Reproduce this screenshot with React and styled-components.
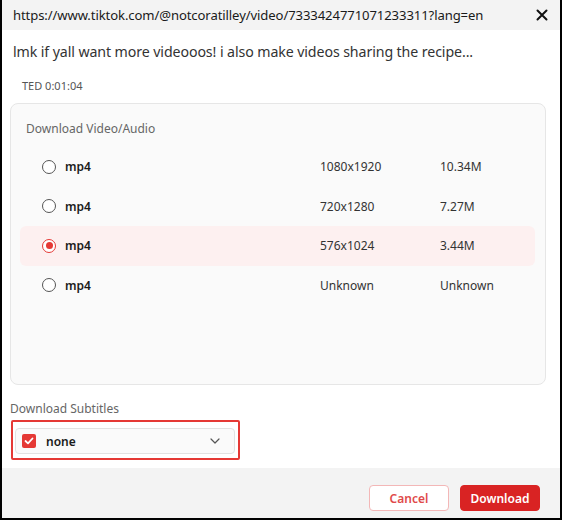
import React, { useState } from 'react';
import styled, { createGlobalStyle } from 'styled-components';

const GlobalStyle = createGlobalStyle`
  html, body {
    margin: 0;
    padding: 0;
    background: #fff;
  }
  body {
    font-family: "Noto Sans", "Open Sans", sans-serif;
  }
`;

const Frame = styled.div`
  width: 562px;
  height: 520px;
  box-sizing: border-box;
  border: 2px solid #000;
  border-top: none;
  display: flex;
  flex-direction: column;
  background: #fff;
  overflow: hidden;
`;

const Header = styled.div`
  height: 30px;
  flex-shrink: 0;
  display: flex;
  align-items: center;
  justify-content: space-between;
  background: #f3f3f3;
  padding: 0 12px 0 11px;
`;

const Url = styled.div`
  font-size: 13.1px;
  color: #1a1a1a;
  letter-spacing: -0.1px;
`;

const CloseButton = styled.button`
  border: none;
  background: transparent;
  padding: 0;
  display: flex;
  cursor: pointer;
`;

const Body = styled.div`
  flex: 1;
  display: flex;
  flex-direction: column;
  padding: 0 14px 0 8px;
`;

const Title = styled.div`
  font-size: 14.2px;
  color: #333;
  margin: 12px 0 0 3px;
  line-height: 20px;
  letter-spacing: -0.1px;
`;

const Duration = styled.div`
  font-size: 11px;
  color: #555;
  margin: 17px 0 0 12px;
  line-height: 14px;
`;

const Panel = styled.div`
  margin-top: 10px;
  height: 282px;
  box-sizing: border-box;
  border: 1px solid #e6e6e6;
  border-radius: 8px;
  background: #fafafa;
  padding: 17px 10px 0 9px;
`;

const SectionLabel = styled.div`
  font-size: 12px;
  color: #666;
  line-height: 16px;
  margin-left: ${(p) => p.$indent || 0}px;
`;

const Rows = styled.div`
  display: flex;
  flex-direction: column;
  margin-top: 10px;
`;

const Row = styled.label`
  display: grid;
  grid-template-columns: 23px 1fr 120px 95px;
  align-items: center;
  height: 39.5px;
  padding-left: 22px;
  border-radius: 6px;
  background: ${(p) => (p.$active ? '#fdf0f0' : 'transparent')};
  cursor: pointer;
  font-size: 12px;
  color: #222;
`;

const Radio = styled.span`
  width: 14px;
  height: 14px;
  box-sizing: border-box;
  border-radius: 50%;
  border: 1px solid ${(p) => (p.$checked ? '#e53935' : '#555')};
  display: flex;
  align-items: center;
  justify-content: center;
  background: #fff;

  &::after {
    content: '';
    width: 7px;
    height: 7px;
    border-radius: 50%;
    background: ${(p) => (p.$checked ? '#e53935' : 'transparent')};
  }
`;

const Format = styled.span`
  font-weight: 600;
  color: #1a1a1a;
`;

const Cell = styled.span`
  color: #333;
`;

const SubtitleBlock = styled.div`
  margin-top: 16px;
`;

const Highlight = styled.div`
  margin: 3px 0 0 1px;
  width: 229px;
  height: 40px;
  box-sizing: border-box;
  border: 2px solid #e53935;
  border-radius: 2px;
  padding: 6px 3px 4px 2px;
  display: flex;
`;

const Select = styled.div`
  flex: 1;
  display: flex;
  align-items: center;
  border: 1px solid #e2e2e2;
  border-radius: 4px;
  background: #fafafa;
  padding: 0 14px 0 6px;
`;

const Check = styled.span`
  width: 14px;
  height: 14px;
  border-radius: 2px;
  background: #e53935;
  display: flex;
  align-items: center;
  justify-content: center;
`;

const SelectText = styled.span`
  flex: 1;
  margin-left: 10px;
  font-size: 12px;
  font-weight: 600;
  color: #1a1a1a;
`;

const Footer = styled.div`
  height: 50px;
  flex-shrink: 0;
  display: flex;
  align-items: center;
  justify-content: flex-end;
  gap: 11px;
  padding: 0 20px 0 0;
  background: #f3f3f3;
`;

const Button = styled.button`
  width: 80px;
  height: 26px;
  border-radius: 4px;
  font-family: inherit;
  font-size: 12px;
  font-weight: 600;
  cursor: pointer;
  border: 1px solid ${(p) => (p.$primary ? '#d92323' : '#f3b7b7')};
  background: ${(p) => (p.$primary ? '#d92323' : '#fff')};
  color: ${(p) => (p.$primary ? '#fff' : '#e04a4a')};
  margin-top: 10px;
`;

const options = [
  { format: 'mp4', res: '1080x1920', size: '10.34M' },
  { format: 'mp4', res: '720x1280', size: '7.27M' },
  { format: 'mp4', res: '576x1024', size: '3.44M' },
  { format: 'mp4', res: 'Unknown', size: 'Unknown' },
];

const App = () => {
  const [selected, setSelected] = useState(2);
  return (
    <Frame>
      <GlobalStyle />
      <Header>
        <Url>https://www.tiktok.com/@notcoratilley/video/7333424771071233311?lang=en</Url>
        <CloseButton aria-label="close">
          <svg width="12" height="12" viewBox="0 0 12 12">
            <path d="M1.5 1.5 L10.5 10.5 M10.5 1.5 L1.5 10.5" stroke="#111" strokeWidth="2" strokeLinecap="round" />
          </svg>
        </CloseButton>
      </Header>
      <Body>
        <Title>lmk if yall want more videooos! i also make videos sharing the recipe...</Title>
        <Duration>TED 0:01:04</Duration>
        <Panel>
          <SectionLabel $indent={6}>Download Video/Audio</SectionLabel>
          <Rows>
            {options.map((o, i) => (
              <Row key={i} $active={selected === i} onClick={() => setSelected(i)}>
                <Radio $checked={selected === i} />
                <Format>{o.format}</Format>
                <Cell>{o.res}</Cell>
                <Cell>{o.size}</Cell>
              </Row>
            ))}
          </Rows>
        </Panel>
        <SubtitleBlock>
          <SectionLabel>Download Subtitles</SectionLabel>
          <Highlight>
            <Select>
              <Check>
                <svg width="10" height="8" viewBox="0 0 10 8">
                  <path d="M1.5 4 L4 6.3 L8.5 1.5" fill="none" stroke="#fff" strokeWidth="1.8" strokeLinecap="round" strokeLinejoin="round" />
                </svg>
              </Check>
              <SelectText>none</SelectText>
              <svg width="10" height="6" viewBox="0 0 10 6">
                <path d="M1 1 L5 5 L9 1" fill="none" stroke="#555" strokeWidth="1.2" strokeLinecap="round" strokeLinejoin="round" />
              </svg>
            </Select>
          </Highlight>
        </SubtitleBlock>
      </Body>
      <Footer>
        <Button>Cancel</Button>
        <Button $primary>Download</Button>
      </Footer>
    </Frame>
  );
};

export default App;
